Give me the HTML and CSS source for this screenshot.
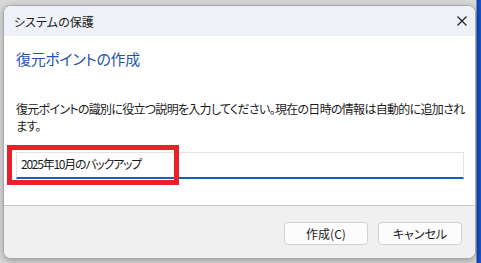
FILE: index.html
```html
<!DOCTYPE html>
<html lang="ja">
<head>
<meta charset="utf-8">
<title>システムの保護</title>
<link rel="stylesheet" href="styles.css">
</head>
<body>
<div class="desktop">
  <div class="window">
    <div class="titlebar">
      <span class="title">システムの保護</span>
      <svg class="close" width="10" height="10" viewBox="0 0 10 10"><path d="M0.5 0.5 L9.5 9.5 M9.5 0.5 L0.5 9.5" stroke="#1a1a1a" stroke-width="1.1" fill="none"/></svg>
    </div>
    <div class="content">
      <h1 class="heading">復元ポイントの作成</h1>
      <p class="desc">復元ポイントの識別に役立つ説明を入力してください。現在の日時の情報は自動的に追加されます。</p>
      <div class="field">
        <div class="input">2025年10月のバックアップ</div>
        <div class="highlight"></div>
      </div>
    </div>
    <div class="footer">
      <button class="btn">作成(C)</button>
      <button class="btn">キャンセル</button>
    </div>
  </div>
</div>
</body>
</html>
```
FILE: styles.css
```css
html, body {
  margin: 0;
  padding: 0;
}
body {
  width: 481px;
  height: 263px;
  overflow: hidden;
  background: linear-gradient(to right, #d6d6d6 0, #d6d6d6 476px, #0d3fae 477px, #1a56c8 481px);
  font-family: "Noto Sans CJK JP", "Noto Sans", sans-serif;
  font-feature-settings: "palt";
  color: #1a1a1a;
}
.desktop {
  padding: 5px 0 0 3px;
}
.window {
  width: 471px;
  height: 252px;
  border: 1px solid #a8a8a8;
  border-radius: 8px;
  overflow: hidden;
  display: flex;
  flex-direction: column;
  background: #ffffff;
  box-shadow: 0 2px 6px rgba(0,0,0,0.25);
}
.titlebar {
  height: 30px;
  flex: none;
  background: #eef2f8;
  display: flex;
  align-items: center;
  justify-content: space-between;
  padding: 0 8px 0 10px;
}
.title {
  font-size: 12px;
  letter-spacing: 0.1px;
}
.close {
  display: block;
}
.content {
  flex: 1;
  padding: 12px 11px 0 12px;
  border-bottom: 1px solid #c6c6c6;
}
.heading {
  margin: 0;
  font-size: 15px;
  font-weight: normal;
  color: #1f55ad;
  line-height: 22px;
  letter-spacing: -0.35px;
}
.desc {
  margin: 30px -3px 0 0;
  font-size: 12px;
  line-height: 17px;
  letter-spacing: -0.7px;
}
.field {
  position: relative;
  margin-top: 18px;
}
.input {
  height: 24px;
  border: 1px solid #e2e2e2;
  border-bottom: 2px solid #0a64bd;
  font-size: 12px;
  line-height: 22px;
  padding-left: 4px;
  letter-spacing: -1.25px;
}
.highlight {
  position: absolute;
  left: -9px;
  top: -7px;
  width: 162px;
  height: 30px;
  border: 5px solid #e8202a;
}
.footer {
  height: 52px;
  flex: none;
  background: #f0f0f0;
  display: flex;
  justify-content: flex-end;
  align-items: flex-start;
  gap: 10px;
  padding: 16px 13px 0 0;
  box-sizing: border-box;
}
.btn {
  width: 84px;
  height: 23px;
  border: 1px solid #d2d2d2;
  border-radius: 4px;
  background: #fcfcfc;
  font-family: "Noto Sans CJK JP", "Noto Sans", sans-serif;
  font-feature-settings: "palt";
  font-size: 12px;
  color: #1a1a1a;
  padding: 0;
}
```
